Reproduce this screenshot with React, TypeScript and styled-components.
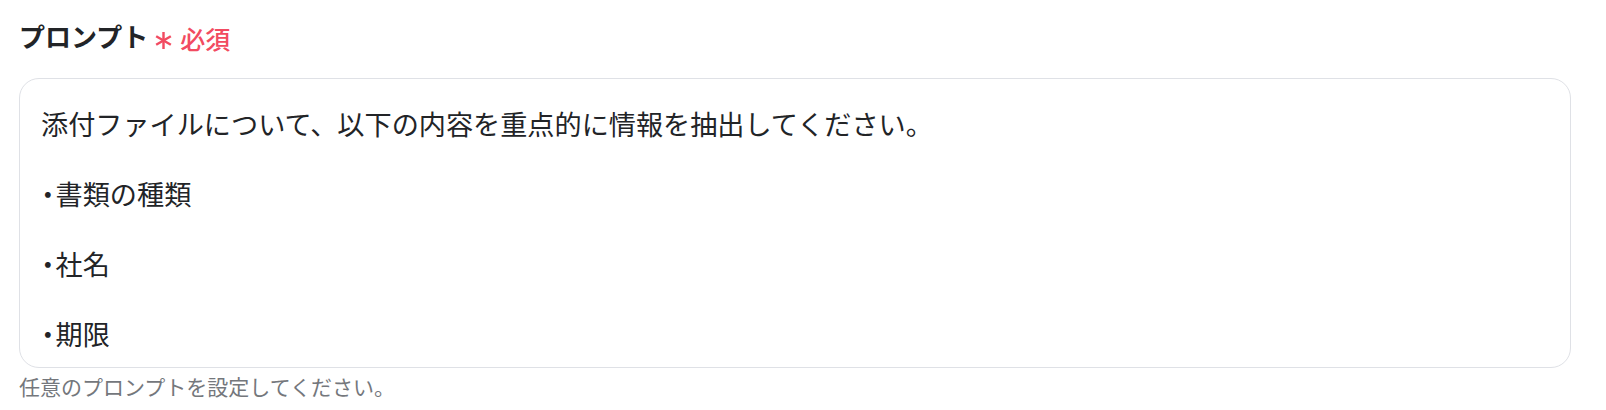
import React from "react";
import styled, { createGlobalStyle } from "styled-components";

const Global = createGlobalStyle`
  html, body { margin: 0; padding: 0; background: #ffffff; }
  body { font-family: "Noto Sans CJK JP", "Noto Sans", sans-serif; }
`;

const Field = styled.section`
  padding: 18px 35px 0 19px;
  display: flex;
  flex-direction: column;
`;

const LabelRow = styled.div`
  display: flex;
  align-items: flex-start;
  height: 36px;
`;

const LabelText = styled.span`
  font-size: 26px;
  line-height: 36px;
  font-weight: 700;
  color: #222427;
`;

const Required = styled.span`
  display: inline-flex;
  align-items: center;
  gap: 8px;
  margin-left: 7px;
  padding-top: 2px;
  color: #f24b61;
  font-size: 25px;
  font-weight: 500;
  line-height: 36px;
`;

const Star = styled.svg`
  width: 17px;
  height: 17px;
  margin-top: 5px;
`;

const TextBox = styled.div`
  margin-top: 24px;
  height: 290px;
  box-sizing: border-box;
  border: 1px solid #dfe1e6;
  border-radius: 20px;
  padding: 27px 21px 16px;
  overflow: hidden;
  font-size: 27.15px;
  line-height: 35px;
  color: #222427;
`;

const Line = styled.div`
  min-height: 35px;
  white-space: pre-wrap;
`;

const Bullet = styled.span`
  font-feature-settings: "halt" 1;
  margin-right: 1px;
`;

const Helper = styled.p`
  margin: 3px 0 0;
  font-size: 21px;
  line-height: 30px;
  color: #74777c;
`;

const lines: { bullet?: boolean; text: string }[] = [
  { text: "添付ファイルについて、以下の内容を重点的に情報を抽出してください。" },
  { text: "" },
  { bullet: true, text: "書類の種類" },
  { text: "" },
  { bullet: true, text: "社名" },
  { text: "" },
  { bullet: true, text: "期限" },
];

export default function App() {
  return (
    <>
      <Global />
      <Field>
        <LabelRow>
          <LabelText>プロンプト</LabelText>
          <Required>
            <Star viewBox="0 0 16 16" aria-hidden>
              <g stroke="#f24b61" strokeWidth="2.3" strokeLinecap="butt">
                <line x1="8" y1="0" x2="8" y2="16" />
                <line x1="1.1" y1="4" x2="14.9" y2="12" />
                <line x1="1.1" y1="12" x2="14.9" y2="4" />
              </g>
            </Star>
            必須
          </Required>
        </LabelRow>
        <TextBox>
          {lines.map((l, i) => (
            <Line key={i}>
              {l.bullet && <Bullet>・</Bullet>}
              {l.text}
            </Line>
          ))}
        </TextBox>
        <Helper>任意のプロンプトを設定してください。</Helper>
      </Field>
    </>
  );
}
